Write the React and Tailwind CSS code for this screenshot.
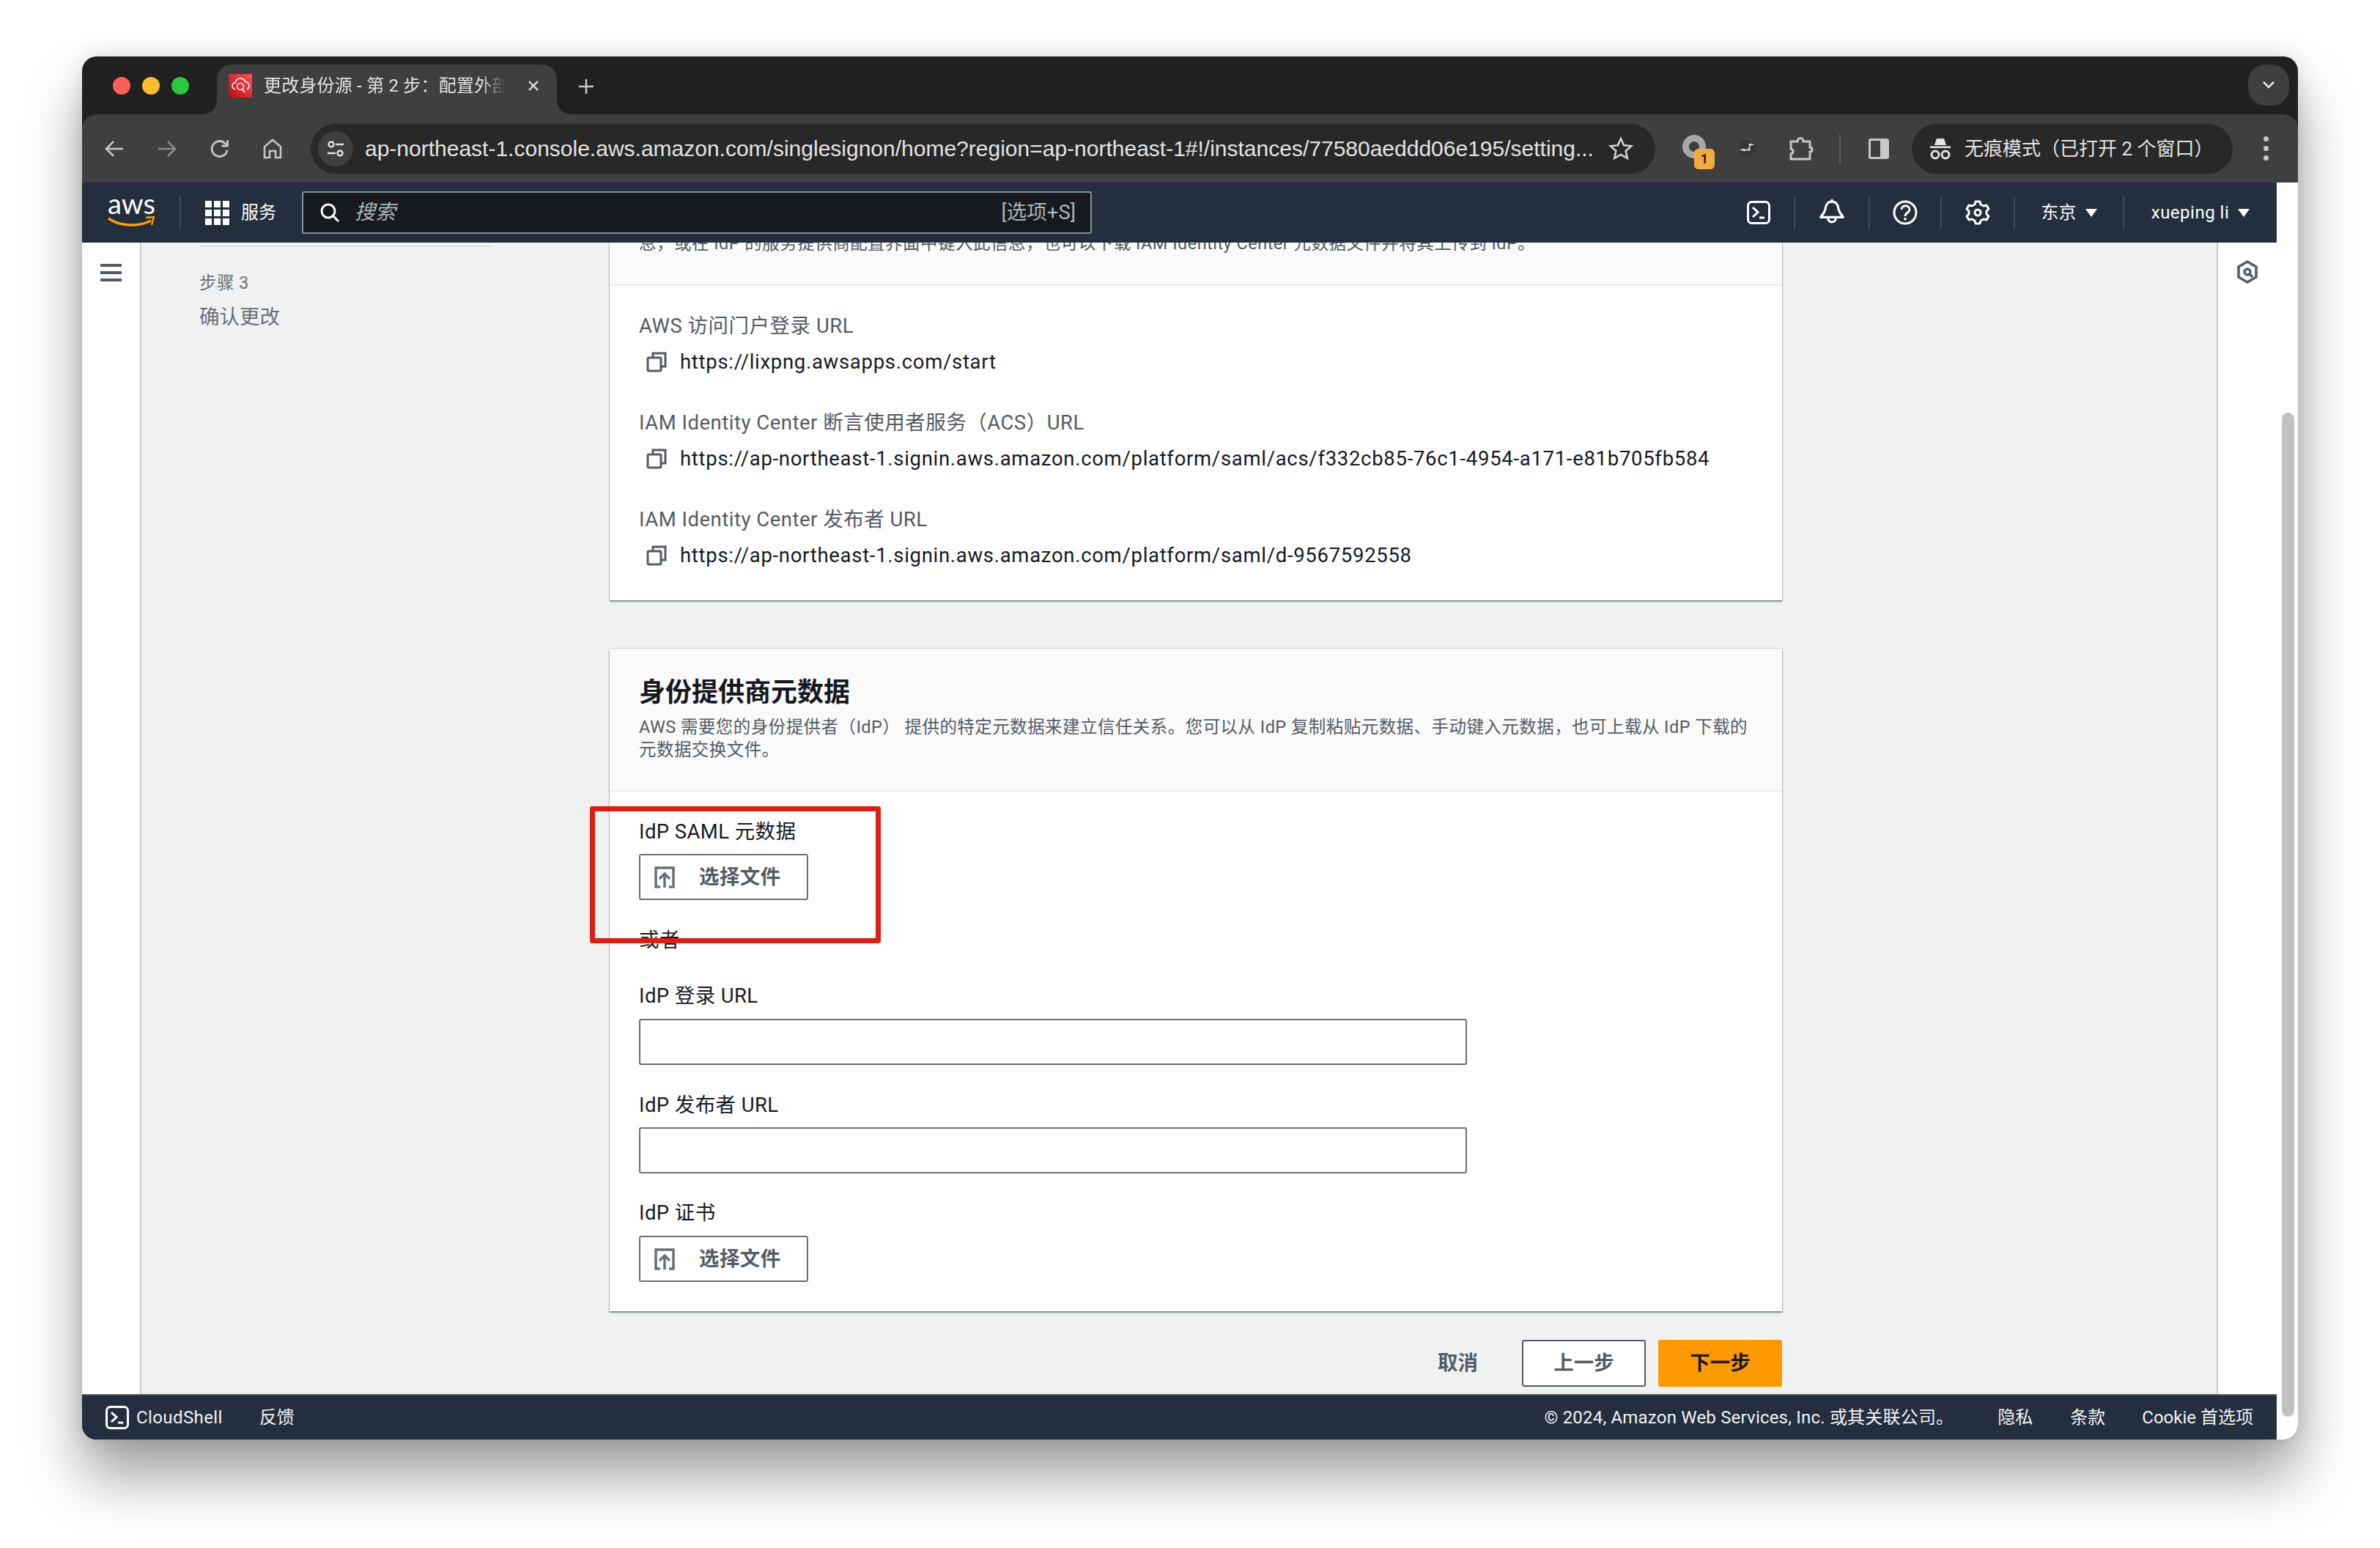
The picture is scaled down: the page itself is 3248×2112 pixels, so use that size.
import React from 'react'

function TrafficLights() {
    return (
        <div className="flex gap-4 mt-[28px] ml-[42px]">
            <div className="w-6 h-6 rounded-full bg-[#ff5f57]" />
            <div className="w-6 h-6 rounded-full bg-[#febc2e]" />
            <div className="w-6 h-6 rounded-full bg-[#28c840]" />
        </div>
    )
}

function Favicon() {
    return (
        <svg width="32" height="32" viewBox="0 0 32 32" className="shrink-0">
            <defs>
                <linearGradient id="fav" x1="0" y1="1" x2="1" y2="0">
                    <stop offset="0" stopColor="#bd0816" />
                    <stop offset="1" stopColor="#ff5252" />
                </linearGradient>
            </defs>
            <rect width="32" height="32" fill="url(#fav)" />
            <path d="M9 21c-3-1-4-3-4-5 0-3 2-4 4-4 1-4 4-6 7-6 4 0 6 2 7 5 3 0 5 2 5 5 0 2-1 4-3 5" fill="none" stroke="#fff" strokeWidth="1.6" />
            <circle cx="16" cy="17" r="4.5" fill="none" stroke="#fff" strokeWidth="1.6" />
            <path d="M19 21l3 4" stroke="#fff" strokeWidth="1.8" />
        </svg>
    )
}

function Tab() {
    return (
        <div className="relative flex items-center w-[464px] h-[68px] mt-[11px] ml-[38px] pl-4 pb-[10px] bg-[#3f3f3f] rounded-t-[20px]">
            <div className="absolute left-[-20px] bottom-0 w-5 h-5 bg-[radial-gradient(circle_at_0_0,transparent_20px,#3f3f3f_20px)]" />
            <div className="absolute right-[-20px] bottom-0 w-5 h-5 bg-[radial-gradient(circle_at_100%_0,transparent_20px,#3f3f3f_20px)]" />
            <Favicon />
            <div className="w-[336px] ml-4 text-[24px] leading-8 tracking-[0.2px] text-[#e3e3e3] whitespace-nowrap [mask-image:linear-gradient(90deg,#000_88%,transparent_98%)]">
                更改身份源 - 第 2 步：配置外部
            </div>
            <svg width="18" height="18" viewBox="0 0 18 18" className="ml-[23px]">
                <path d="M3 3l12 12M15 3L3 15" stroke="#e3e3e3" strokeWidth="2.4" />
            </svg>
        </div>
    )
}

function ToolIcon({ children, className = '' }) {
    return (
        <div className={`flex items-center justify-center w-[72px] shrink-0 ${className}`}>
            {children}
        </div>
    )
}

function Toolbar() {
    return (
        <div className="flex items-center h-[93px] pl-2 bg-[#3f3f3f] rounded-t-[20px]">
            <ToolIcon>
                <svg width="28" height="28" viewBox="0 0 28 28" fill="none" stroke="#c7c7c7" strokeWidth="2.6">
                    <path d="M26 14H3M13 4L3 14l10 10" />
                </svg>
            </ToolIcon>
            <ToolIcon>
                <svg width="28" height="28" viewBox="0 0 28 28" fill="none" stroke="#8a8a8a" strokeWidth="2.6">
                    <path d="M2 14h23M15 4l10 10-10 10" />
                </svg>
            </ToolIcon>
            <ToolIcon>
                <svg width="30" height="30" viewBox="0 0 30 30" fill="none" stroke="#c7c7c7" strokeWidth="2.8">
                    <path d="M25 17a10.500 10.500 0 1 1-3-9.500L25 10" />
                    <path d="M25.500 3v8h-8" />
                </svg>
            </ToolIcon>
            <ToolIcon>
                <svg width="30" height="30" viewBox="0 0 30 30" fill="none" stroke="#c7c7c7" strokeWidth="2.6">
                    <path d="M4 27V12L15 3l11 9v15h-7v-9h-8v9z" />
                </svg>
            </ToolIcon>
            <div className="flex items-center w-[1835px] h-[68px] ml-4 pl-[10px] rounded-full bg-[#282828] shrink-0">
                <div className="flex items-center justify-center w-12 h-12 rounded-full bg-[#3f3f3f] shrink-0">
                    <svg width="26" height="26" viewBox="0 0 26 26" fill="none" stroke="#e3e3e3" strokeWidth="2.4">
                        <circle cx="7" cy="7" r="3.500" />
                        <path d="M13 7h11M2 19h11" />
                        <circle cx="19" cy="19" r="3.500" />
                    </svg>
                </div>
                <div className="w-[1676px] ml-4 text-[30px] leading-9 text-[#e3e3e3] whitespace-nowrap font-['Liberation_Sans',sans-serif]">
                    ap-northeast-1.console.aws.amazon.com/singlesignon/home?region=ap-northeast-1#!/instances/77580aeddd06e195/setting...
                </div>
                <svg width="34" height="34" viewBox="0 0 34 34" fill="none" stroke="#d0d0d0" strokeWidth="2.6" className="ml-[21px]">
                    <path d="M17 3l4.200 9.200 10 1.100-7.500 6.700 2.100 9.900-8.800-5-8.800 5 2.100-9.900-7.500-6.700 10-1.100z" />
                </svg>
            </div>
            <div className="relative flex items-center justify-start w-[52px] h-[38px] ml-[27px] pl-[10px] shrink-0">
                <div className="w-8 h-8 -mt-[6px] rounded-full border-[9px] border-[#a8a8a8]" />
                <div className="absolute left-[26px] top-[19px] flex items-center justify-center w-7 h-7 rounded-md bg-[#f0ac40] text-[18px] leading-none font-bold text-[#202020]">1</div>
            </div>
            <div className="flex items-center justify-center w-[52px] ml-[21px] shrink-0">
                <svg width="28" height="28" viewBox="0 0 28 28" fill="none">
                    <circle cx="13" cy="13" r="11" fill="#363636" />
                    <path d="M4 15l7 1 5-1 1-6 5-1" stroke="#e0e0e0" strokeWidth="1.500" />
                    <circle cx="9" cy="15.500" r="1.800" fill="#e0e0e0" />
                    <circle cx="16" cy="15" r="1.800" fill="#e0e0e0" />
                    <circle cx="17.500" cy="8.500" r="1.800" fill="#e0e0e0" />
                </svg>
            </div>
            <div className="flex items-center justify-center w-[52px] ml-[21px] shrink-0">
                <svg width="34" height="36" viewBox="0 0 34 36" fill="none" stroke="#c7c7c7" strokeWidth="3">
                    <path d="M3 8h9c0-6 8-6 8 0h9v8c4 0 4 6 0 6v10H3v-7c4-1 4-6 0-7z" />
                </svg>
            </div>
            <div className="w-0.5 h-10 ml-[26px] bg-[#5e5e5e] shrink-0" />
            <div className="flex items-center justify-center w-[52px] ml-[26px] shrink-0">
                <div className="flex w-7 h-7 border-[3px] border-[#c7c7c7] rounded-[3px]">
                    <div className="w-3/5 bg-[#3f3f3f]" />
                    <div className="w-2/5 bg-[#c7c7c7]" />
                </div>
            </div>
            <div className="flex items-center w-[438px] h-[68px] ml-[19px] pl-6 rounded-full bg-[#282828] shrink-0">
                <svg width="30" height="32" viewBox="0 0 30 32" fill="#e3e3e3" className="shrink-0">
                    <path d="M10 2h10l3 9H7zM1 12.500h28v2.500H1z" />
                    <circle cx="8" cy="24" r="5" fill="none" stroke="#e3e3e3" strokeWidth="3" />
                    <circle cx="22" cy="24" r="5" fill="none" stroke="#e3e3e3" strokeWidth="3" />
                </svg>
                <span className="ml-[18px] text-[26px] leading-9 text-[#e3e3e3] whitespace-nowrap">无痕模式（已打开 2 个窗口）</span>
            </div>
            <div className="flex flex-col items-center gap-[6px] w-[72px] ml-[9px] shrink-0">
                <div className="w-[7px] h-[7px] rounded-full bg-[#c7c7c7]" />
                <div className="w-[7px] h-[7px] rounded-full bg-[#c7c7c7]" />
                <div className="w-[7px] h-[7px] rounded-full bg-[#c7c7c7]" />
            </div>
        </div>
    )
}

function ShellIcon({ size = 32 }) {
    return (
        <svg width={size} height={size} viewBox="0 0 32 32" fill="none" stroke="#fff" strokeWidth="3" className="shrink-0">
            <rect x="1.500" y="1.500" width="29" height="29" rx="5" />
            <path d="M8 9l7 6.500-7 6.500" />
            <path d="M17 23h7" />
        </svg>
    )
}

function NavCell({ width, children, last }) {
    return (
        <div className={`flex items-center justify-center h-11 ${width} ${last ? '' : 'border-r-2 border-[#414d5c]'}`}>
            {children}
        </div>
    )
}

function Caret() {
    return <div className="w-0 h-0 ml-3 border-x-[8px] border-x-transparent border-t-[11px] border-t-white" />
}

function AwsNav() {
    return (
        <div className="flex items-center h-[82px] bg-[#232f3e] text-white">
            <div className="relative w-[63px] h-[44px] ml-[35px] shrink-0">
                <div className="-mt-[7px] text-[38px] leading-[32px] text-center font-['Lato',sans-serif]">aws</div>
                <svg width="64" height="18" viewBox="0 0 64 18" fill="none" className="absolute left-0 top-[27px]">
                    <path d="M1 3c16 11 40 12 58 3" stroke="#ff9900" strokeWidth="3.500" />
                    <path d="M52 2l11-1-3 11" stroke="#ff9900" strokeWidth="2.500" />
                </svg>
            </div>
            <div className="w-0.5 h-11 ml-[35px] bg-[#414d5c]" />
            <div className="grid grid-cols-3 gap-[3px] ml-[33px] shrink-0">
                {[0, 1, 2, 3, 4, 5, 6, 7, 8].map((i) => (
                    <div key={i} className="w-[9px] h-[9px] bg-white" />
                ))}
            </div>
            <span className="ml-4 text-[24px] leading-8 whitespace-nowrap">服务</span>
            <div className="flex items-center w-[1078px] h-[58px] ml-[35px] pl-[22px] pr-5 bg-[#16191f] border-2 border-[#879596] rounded-[3px] shrink-0">
                <svg width="28" height="28" viewBox="0 0 28 28" fill="none" stroke="#fff" strokeWidth="3">
                    <circle cx="12" cy="12" r="9" />
                    <path d="M18.500 18.500L26 26" />
                </svg>
                <span className="ml-[20px] text-[28px] italic text-[#aab7b8]">搜索</span>
                <span className="ml-auto text-[27.5px] text-[#aab7b8]">[选项+S]</span>
            </div>
            <div className="flex items-center ml-auto">
                <NavCell width="w-[98px]"><ShellIcon /></NavCell>
                <NavCell width="w-[102px]">
                    <svg width="36" height="36" viewBox="0 0 34 34" fill="none" stroke="#fff" strokeWidth="3">
                        <path d="M17 3c-5 0-8 4-8.500 9-.5 4-3 7-6 11h29c-3-4-5.500-7-6-11C25 7 22 3 17 3z" strokeLinejoin="round" />
                        <path d="M17 0v3" />
                        <path d="M12 24c0 7 10 7 10 0" />
                    </svg>
                </NavCell>
                <NavCell width="w-[98px]">
                    <svg width="34" height="34" viewBox="0 0 34 34" fill="none" stroke="#fff" strokeWidth="3">
                        <circle cx="17" cy="17" r="15" />
                        <path d="M12 13c0-7 11-7 11 0 0 4-6 4-6 9" />
                        <path d="M17 24v3.500" />
                    </svg>
                </NavCell>
                <NavCell width="w-[100px]">
                    <svg width="34" height="34" viewBox="0 0 34 34" fill="none" stroke="#fff" strokeWidth="3" strokeLinejoin="round">
                        <path d="M14 2h6l1 4 4 2 4-1 3 5-3 3v4l3 3-3 5-4-1-4 2-1 4h-6l-1-4-4-2-4 1-3-5 3-3v-4l-3-3 3-5 4 1 4-2z" />
                        <circle cx="17" cy="17" r="4" />
                    </svg>
                </NavCell>
                <NavCell width="w-[149px]">
                    <span className="text-[24px]">东京</span>
                    <Caret />
                </NavCell>
                <NavCell width="w-[208px]" last>
                    <span className="text-[24px] tracking-[0.5px] whitespace-nowrap">xueping li</span>
                    <Caret />
                </NavCell>
            </div>
        </div>
    )
}

function CopyIcon() {
    return (
        <svg width="28" height="28" viewBox="0 0 28 28" fill="none" stroke="#545b64" strokeWidth="3" className="shrink-0">
            <rect x="2" y="8" width="18" height="18" rx="1.500" />
            <path d="M9 7V2h17v18h-5" />
        </svg>
    )
}

function UrlField({ label, value }) {
    return (
        <div>
            <div className="text-[27.5px] leading-10 tracking-[0.5px] text-[#545b64]">{label}</div>
            <div className="flex items-center mt-[9px] pl-[10px] leading-10">
                <CopyIcon />
                <span className="ml-[18px] text-[27.5px] tracking-[0.7px] text-[#16191f] whitespace-nowrap">{value}</span>
            </div>
        </div>
    )
}

function FileButton() {
    return (
        <button className="flex items-center w-[231px] h-[63px] pl-[18px] bg-white border-2 border-[#687078] rounded-[3px]">
            <svg width="30" height="30" viewBox="0 0 30 30" fill="none" stroke="#687078" strokeWidth="3.500" className="shrink-0">
                <path d="M9 28H3V2h24v26h-6" />
                <path d="M15 29V11M8 17l7-7 7 7" />
            </svg>
            <span className="ml-[32px] text-[27.5px] font-bold text-[#545b64]">选择文件</span>
        </button>
    )
}

function TextInput() {
    return <div className="w-[1130px] h-[63px] bg-white border-2 border-[#687078] rounded-[3px]" />
}

function Card({ className = '', children }) {
    return (
        <div className={`bg-white shadow-[0_2px_2px_rgba(0,28,36,0.45),0_0_2px_rgba(0,28,36,0.35)] ${className}`}>
            {children}
        </div>
    )
}

function Content() {
    return (
        <div className="flex flex-1 min-h-0 bg-white overflow-hidden">
            <div className="flex items-start justify-center w-[81px] pt-[29px] border-r-2 border-[#c6cbcf] shrink-0">
                <div className="flex flex-col gap-[6px]">
                    <div className="w-[29px] h-1 bg-[#545b64]" />
                    <div className="w-[29px] h-1 bg-[#545b64]" />
                    <div className="w-[29px] h-1 bg-[#545b64]" />
                </div>
            </div>
            <div className="flex flex-1 bg-[#f0f2f2]">
                <div className="w-[639px] pl-[79px] shrink-0">
                    <div className="w-[399px] h-0.5 mt-[4px] bg-[#dfe3e4]" />
                    <div className="mt-[33px] text-[23.5px] leading-8 tracking-[0.4px] text-[#687078]">步骤 3</div>
                    <div className="mt-[15px] text-[27.5px] leading-8 text-[#687078]">确认更改</div>
                </div>
                <div className="w-[1600px] shrink-0">
                    <Card>
                        <div className="h-[59px] px-10 bg-[#fafafa] border-b-2 border-[#eaeded] overflow-hidden">
                            <div className="-mt-[14px] text-[23.5px] leading-[31px] tracking-[0.47px] text-[#545b64] whitespace-nowrap">
                                息，或在 IdP 的服务提供商配置界面中键入此信息，也可以下载 IAM Identity Center 元数据文件并将其上传到 IdP。
                            </div>
                        </div>
                        <div className="flex flex-col gap-[43px] pt-[35px] pb-[41px] px-10">
                            <UrlField label="AWS 访问门户登录 URL" value="https://lixpng.awsapps.com/start" />
                            <UrlField label="IAM Identity Center 断言使用者服务（ACS）URL" value="https://ap-northeast-1.signin.aws.amazon.com/platform/saml/acs/f332cb85-76c1-4954-a171-e81b705fb584" />
                            <UrlField label="IAM Identity Center 发布者 URL" value="https://ap-northeast-1.signin.aws.amazon.com/platform/saml/d-9567592558" />
                        </div>
                    </Card>
                    <Card className="mt-[66px]">
                        <div className="h-[195px] pt-9 px-10 bg-[#fafafa] border-b-2 border-[#eaeded]">
                            <h2 className="text-[36px] leading-[48px] font-bold text-[#16191f]">身份提供商元数据</h2>
                            <p className="mt-[8px] text-[23.5px] leading-[31px] tracking-[0.45px] text-[#545b64]">
                                AWS 需要您的身份提供者（IdP） 提供的特定元数据来建立信任关系。您可以从 IdP 复制粘贴元数据、手动键入元数据，也可上载从 IdP 下载的元数据交换文件。
                            </p>
                        </div>
                        <div className="relative pt-[35px] pb-10 px-10 text-[27.5px] leading-10 tracking-[0.4px] text-[#16191f]">
                            <div>IdP SAML 元数据</div>
                            <div className="mt-[10px]"><FileButton /></div>
                            <div className="mt-[35px]">或者</div>
                            <div className="mt-[36px]">IdP 登录 URL</div>
                            <div className="mt-[11px]"><TextInput /></div>
                            <div className="mt-[35px]">IdP 发布者 URL</div>
                            <div className="mt-[10px]"><TextInput /></div>
                            <div className="mt-[34px]">IdP 证书</div>
                            <div className="mt-[11px]"><FileButton /></div>
                            <div className="absolute left-[-27px] top-[20px] w-[397px] h-[187px] border-[7px] border-[#dd1f13] rounded-[3px]" />
                        </div>
                    </Card>
                    <div className="flex items-center justify-end mt-[39px]">
                        <span className="text-[27.5px] font-bold text-[#545b64]">取消</span>
                        <button className="w-[169px] h-16 ml-[60px] bg-white border-2 border-[#545b64] rounded-[3px] text-[27.5px] font-bold text-[#545b64]">上一步</button>
                        <button className="w-[169px] h-16 ml-[17px] bg-[#ff9900] rounded-[3px] text-[27.5px] font-bold text-[#16191f]">下一步</button>
                    </div>
                </div>
            </div>
            <div className="flex justify-center w-[82px] pt-[24px] border-l-2 border-[#c6cbcf] shrink-0">
                <svg width="30" height="32" viewBox="0 0 30 32" fill="none" stroke="#545b64" strokeWidth="3.500">
                    <path d="M15 2l12 7v14l-12 7-12-7V9z" />
                    <circle cx="15" cy="16" r="4" />
                    <path d="M18 19l4 4" />
                </svg>
            </div>
        </div>
    )
}

function Footer() {
    return (
        <div className="flex items-center h-[62px] pl-8 pr-8 bg-[#232f3e] border-t-2 border-[#545b64] text-[24px] text-[#f2f3f3] whitespace-nowrap shrink-0">
            <ShellIcon />
            <span className="ml-[10px] tracking-[0.4px]">CloudShell</span>
            <span className="ml-[50px]">反馈</span>
            <span className="ml-auto tracking-[0.2px]">© 2024, Amazon Web Services, Inc. 或其关联公司。</span>
            <span className="ml-[60px]">隐私</span>
            <span className="ml-[51px]">条款</span>
            <span className="ml-[50px]">Cookie 首选项</span>
        </div>
    )
}

export default function App() {
    return (
        <div className="w-[3248px] h-[2112px] pt-[77px] pl-[112px] bg-white overflow-hidden font-[Roboto,'Noto_Sans_CJK_SC',sans-serif]">
            <div className="flex flex-col w-[3024px] h-[1887px] rounded-[20px] bg-[#202020] overflow-hidden shadow-[0_50px_80px_rgba(0,0,0,0.38),0_0_30px_rgba(0,0,0,0.12)]">
                <div className="flex items-start h-[79px] shrink-0">
                    <TrafficLights />
                    <Tab />
                    <svg width="22" height="22" viewBox="0 0 22 22" stroke="#c7c7c7" strokeWidth="2.600" className="mt-[30px] ml-[29px]">
                        <path d="M11 1v20M1 11h20" />
                    </svg>
                    <div className="flex items-center justify-center w-14 h-14 mt-[11px] ml-auto mr-3 rounded-[24px] bg-[#3f3f3f]">
                        <svg width="18" height="12" viewBox="0 0 18 12" fill="none" stroke="#e3e3e3" strokeWidth="2.600">
                            <path d="M2 2l7 7 7-7" />
                        </svg>
                    </div>
                </div>
                <Toolbar />
                <div className="flex flex-1 min-h-0 bg-[#3f3f3f]">
                    <div className="flex flex-col w-[2995px] shrink-0">
                        <AwsNav />
                        <Content />
                        <Footer />
                    </div>
                    <div className="flex-1 pl-[7px] pt-[314px] bg-white">
                        <div className="w-[17px] h-[1370px] rounded-full bg-[#c1c1c1]" />
                    </div>
                </div>
            </div>
        </div>
    )
}
